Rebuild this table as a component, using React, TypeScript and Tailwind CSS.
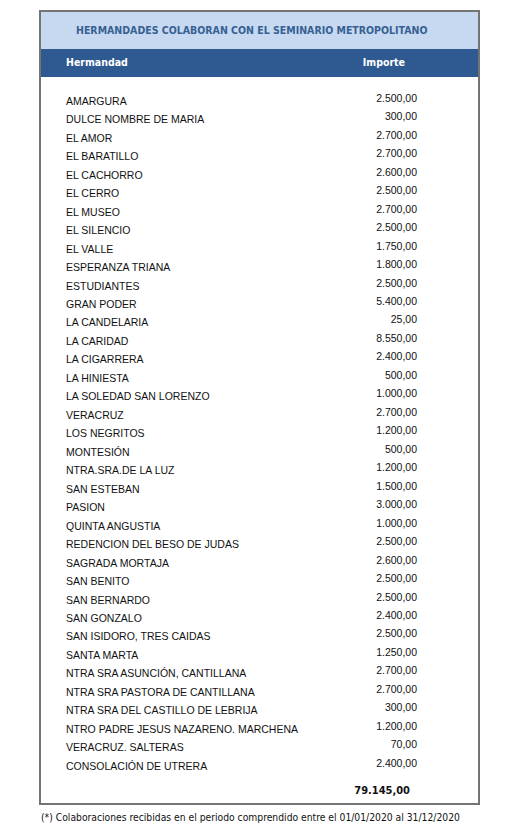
const ROWS: [string, string][] = [
  ["AMARGURA", "2.500,00"],
  ["DULCE NOMBRE DE MARIA", "300,00"],
  ["EL AMOR", "2.700,00"],
  ["EL BARATILLO", "2.700,00"],
  ["EL CACHORRO", "2.600,00"],
  ["EL CERRO", "2.500,00"],
  ["EL MUSEO", "2.700,00"],
  ["EL SILENCIO", "2.500,00"],
  ["EL VALLE", "1.750,00"],
  ["ESPERANZA TRIANA", "1.800,00"],
  ["ESTUDIANTES", "2.500,00"],
  ["GRAN PODER", "5.400,00"],
  ["LA CANDELARIA", "25,00"],
  ["LA CARIDAD", "8.550,00"],
  ["LA CIGARRERA", "2.400,00"],
  ["LA HINIESTA", "500,00"],
  ["LA SOLEDAD SAN LORENZO", "1.000,00"],
  ["VERACRUZ", "2.700,00"],
  ["LOS NEGRITOS", "1.200,00"],
  ["MONTESIÓN", "500,00"],
  ["NTRA.SRA.DE LA LUZ", "1.200,00"],
  ["SAN ESTEBAN", "1.500,00"],
  ["PASION", "3.000,00"],
  ["QUINTA ANGUSTIA", "1.000,00"],
  ["REDENCION DEL BESO DE JUDAS", "2.500,00"],
  ["SAGRADA MORTAJA", "2.600,00"],
  ["SAN BENITO", "2.500,00"],
  ["SAN BERNARDO", "2.500,00"],
  ["SAN GONZALO", "2.400,00"],
  ["SAN ISIDORO, TRES CAIDAS", "2.500,00"],
  ["SANTA MARTA", "1.250,00"],
  ["NTRA SRA ASUNCIÓN, CANTILLANA", "2.700,00"],
  ["NTRA SRA PASTORA DE CANTILLANA", "2.700,00"],
  ["NTRA SRA DEL CASTILLO DE LEBRIJA", "300,00"],
  ["NTRO PADRE JESUS NAZARENO. MARCHENA", "1.200,00"],
  ["VERACRUZ. SALTERAS", "70,00"],
  ["CONSOLACIÓN DE UTRERA", "2.400,00"],
];

export default function App() {
  return (
    <div className="min-h-[830px] w-[507px] bg-white pt-[10px]">
      <div className="ml-[39px] w-[441px] border-2 border-[#747474]">
        <div className="flex h-[37px] items-center bg-[#c6d9f1] pl-[35px] font-['DejaVu_Sans_Condensed','DejaVu_Sans',sans-serif] text-[10.5px] font-bold text-[#366092]">
          HERMANDADES COLABORAN CON EL SEMINARIO METROPOLITANO
        </div>
        <div className="flex h-[28px] items-center bg-[#2f5a91] font-['DejaVu_Sans_Condensed','DejaVu_Sans',sans-serif] text-[10.5px] font-bold text-white">
          <span className="pl-[25px]">Hermandad</span>
          <span className="ml-auto pr-[73px]">Importe</span>
        </div>
        <div className="pt-[14px] font-['Liberation_Sans',Arial,sans-serif] text-[10.5px] text-[#111]">
          {ROWS.map(([name, value]) => (
            <div key={name} className="flex h-[18.47px] items-center">
              <span className="pl-[25px] pt-[3px]">{name}</span>
              <span className="ml-auto pb-[3px] pr-[61px]">{value}</span>
            </div>
          ))}
          <div className="flex h-[29px] items-end pb-[4px] font-['DejaVu_Sans_Condensed','DejaVu_Sans',sans-serif] text-[11px] font-bold">
            <span className="ml-auto pr-[68px]">79.145,00</span>
          </div>
        </div>
      </div>
      <div className="mt-[5px] pl-[41px] font-['DejaVu_Sans_Condensed','DejaVu_Sans',sans-serif] text-[10.25px] text-[#111]">
        (*) Colaboraciones recibidas en el periodo comprendido entre el 01/01/2020 al 31/12/2020
      </div>
    </div>
  );
}
